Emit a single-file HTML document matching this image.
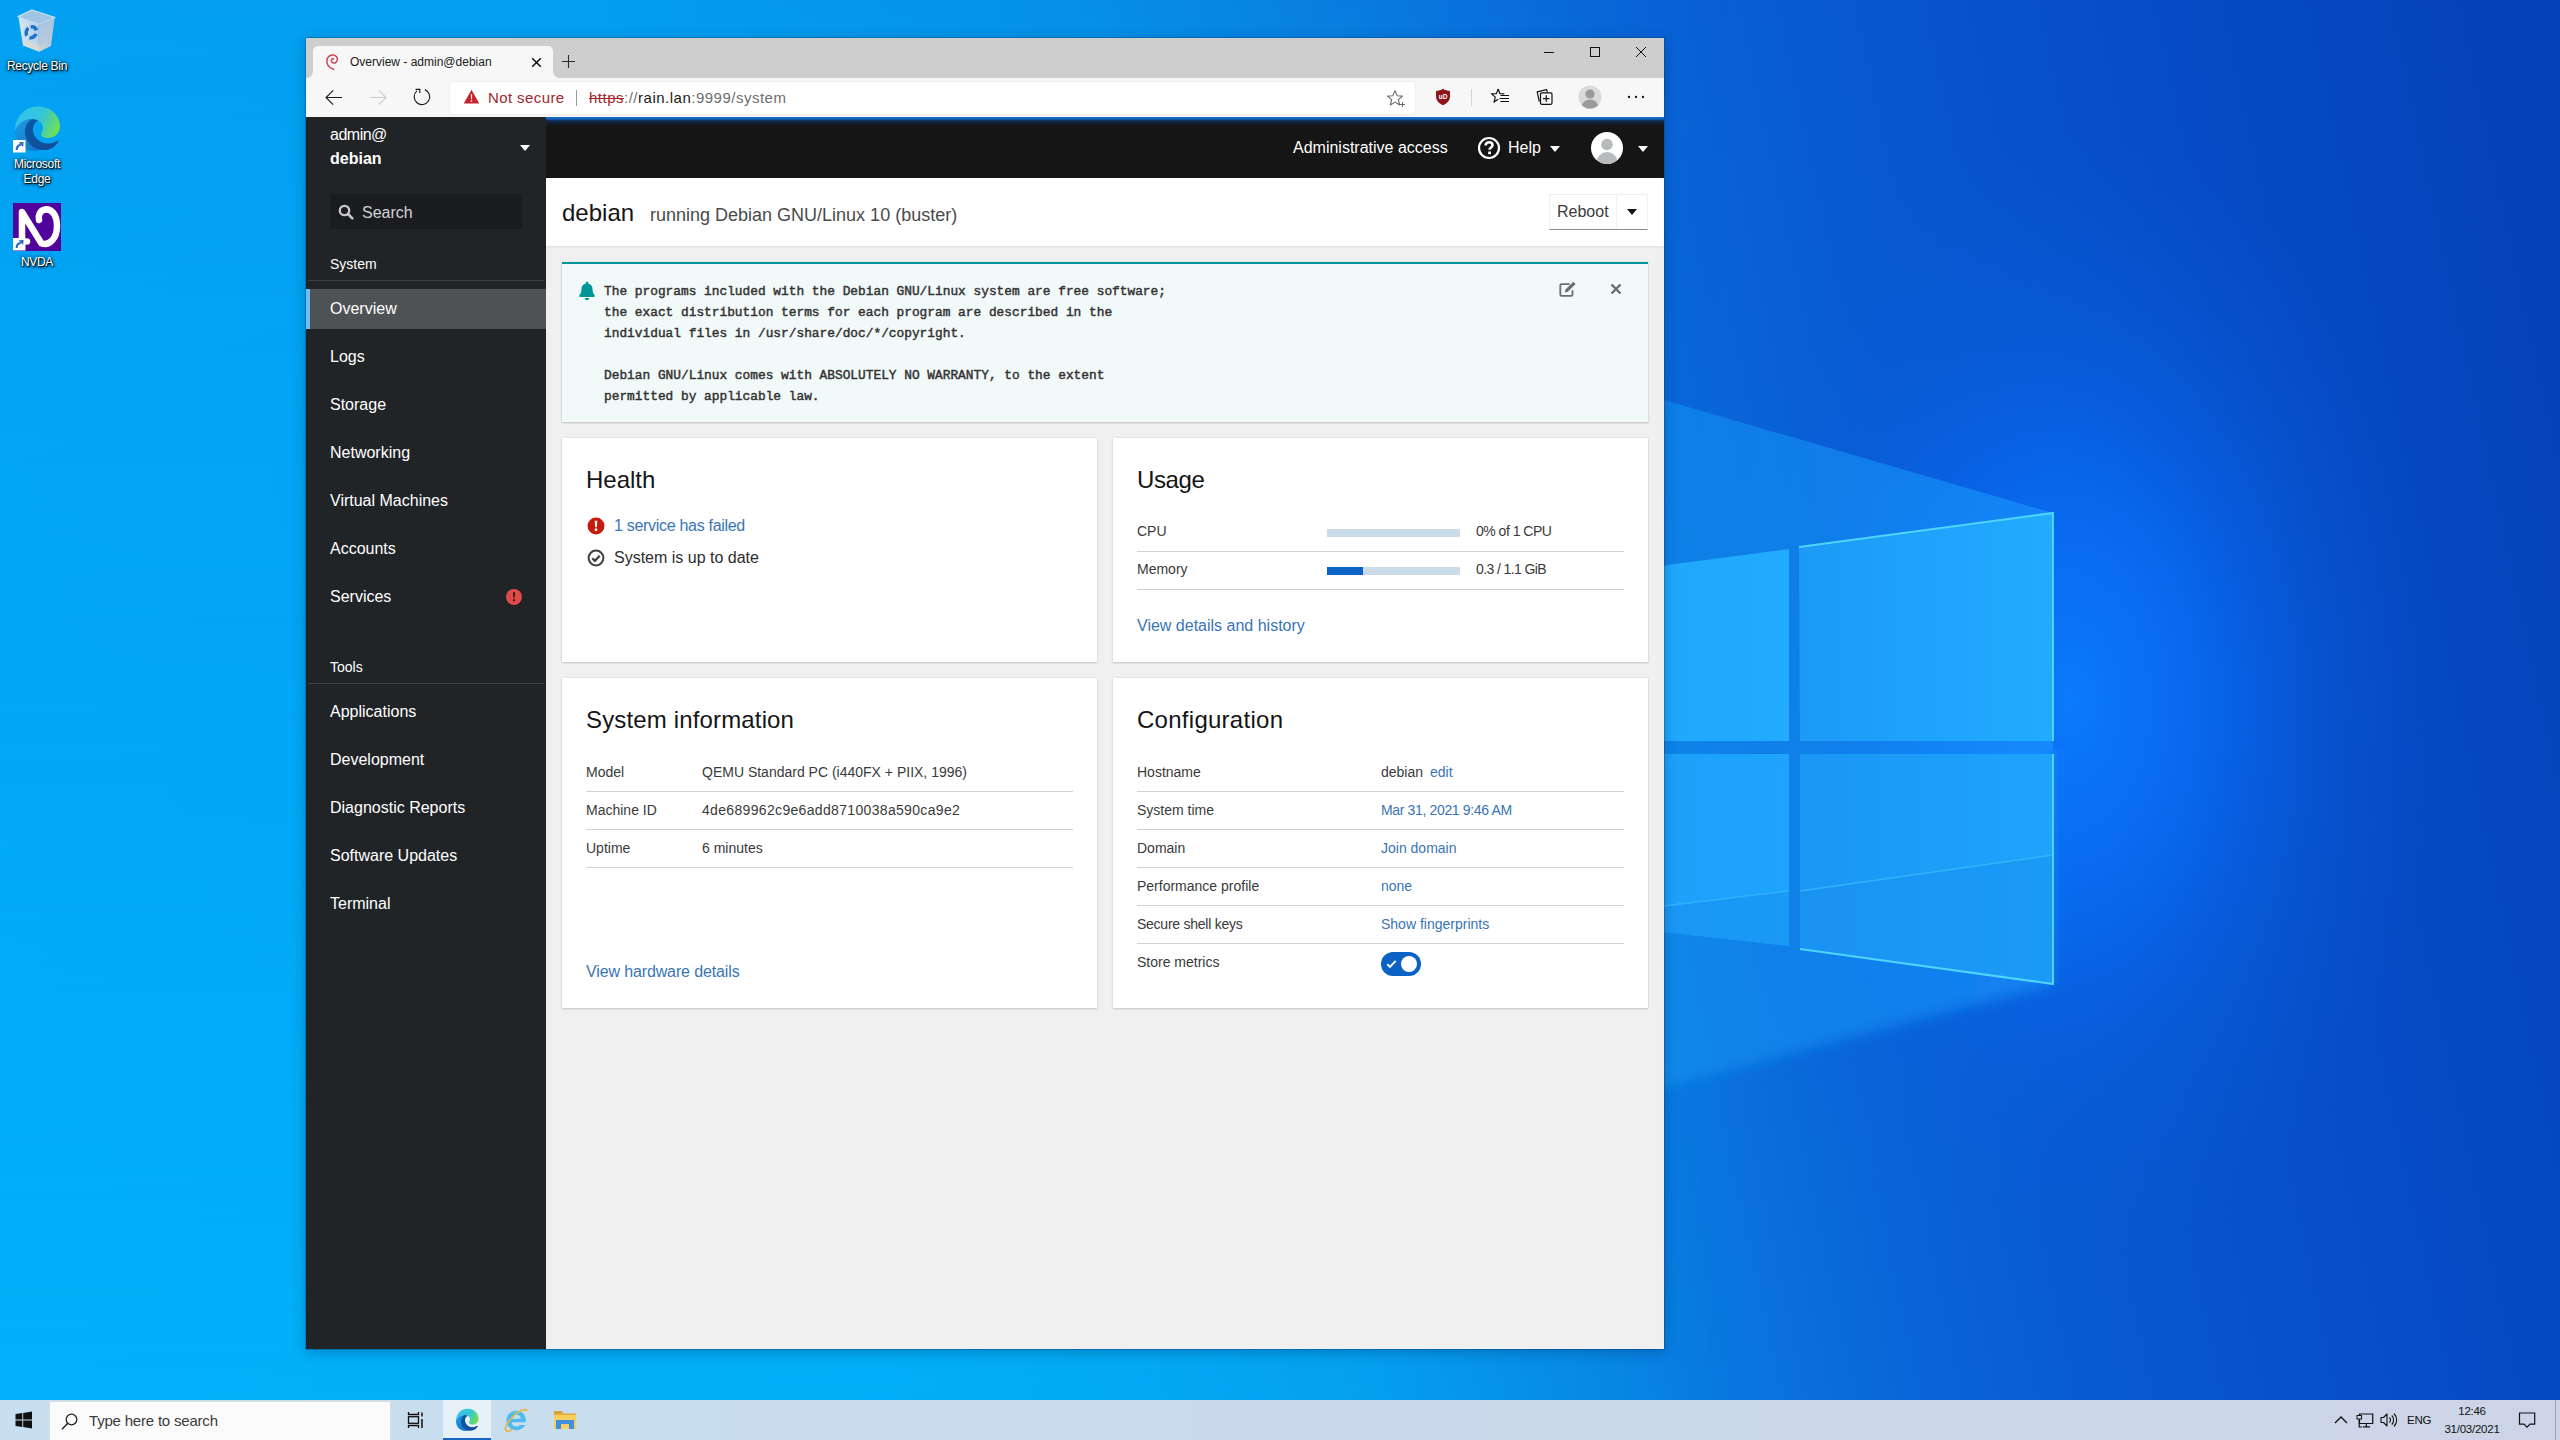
<!DOCTYPE html>
<html lang="en">
<head>
<meta charset="utf-8">
<title>Overview - admin@debian</title>
<style>
*{box-sizing:border-box;margin:0;padding:0}
html,body{width:2560px;height:1440px;overflow:hidden}
body{position:relative;font-family:"Liberation Sans",sans-serif;background:#0391ea;color:#151515}
.abs{position:absolute}
#wall{position:absolute;left:0;top:0;width:2560px;height:1440px}
/* ---------- desktop icons ---------- */
.dlabel{position:absolute;width:90px;text-align:center;color:#fff;font-size:12px;line-height:15px;letter-spacing:-.3px;text-shadow:1px 1px 1px rgba(0,0,0,.95),0 1px 3px rgba(0,0,0,.85),0 0 4px rgba(0,0,0,.6)}
/* ---------- window ---------- */
#win{position:absolute;left:306px;top:38px;width:1358px;height:1311px;background:#f0f0f0;box-shadow:0 0 0 1px rgba(0,50,100,.28),0 3px 12px rgba(0,30,70,.3);overflow:hidden}
#tabstrip{position:absolute;left:0;top:0;width:1358px;height:40px;background:#cecece}
#tab{position:absolute;left:7px;top:8px;width:240px;height:32px;background:#f7f7f7;border-radius:5px 5px 0 0}
#tab:before,#tab:after{content:"";position:absolute;bottom:0;width:6px;height:6px}
#tab:before{left:-6px;background:radial-gradient(circle at 0 0,rgba(247,247,247,0) 5.500px,#f7f7f7 6px)}
#tab:after{right:-6px;background:radial-gradient(circle at 100% 0,rgba(247,247,247,0) 5.500px,#f7f7f7 6px)}
#tab .ttl{position:absolute;left:37px;top:9px;font-size:12px;color:#1b1b1b;white-space:nowrap}
#toolbar{position:absolute;left:0;top:40px;width:1358px;height:39px;background:#f7f7f7}
#addr{position:absolute;left:144px;top:4px;width:965px;height:32px;background:#fff;border-radius:3px;box-shadow:0 0 2px rgba(0,0,0,.12)}
#addr .ns{position:absolute;left:38px;top:7px;letter-spacing:.4px;font-size:15px;color:#a4262c;white-space:nowrap}
#addr .sep{position:absolute;left:126px;top:8px;width:1px;height:16px;background:#9a9a9a}
#addr .url{position:absolute;left:139px;top:7px;letter-spacing:.5px;font-size:15px;color:#6e6e6e;white-space:nowrap}
#addr .url s{color:#a4262c}
#addr .url b{font-weight:400;color:#1b1b1b}
/* ---------- page ---------- */
#page{position:absolute;left:0;top:79px;width:1358px;height:1232px;background:#f0f0f0;overflow:hidden}
#side{position:absolute;left:0;top:0;width:240px;height:1232px;background:#212427;color:#fff}
#topbar{position:absolute;left:240px;top:0;width:1118px;height:61px;background:#151515;color:#fff}
#load{position:absolute;left:240px;top:0;width:1118px;height:9px;background:linear-gradient(#1a6ccc 0,#1562ba 2.200px,#0f3466 3.200px,#11233c 5px,rgba(21,21,21,0) 9px)}
#phead{position:absolute;left:240px;top:61px;width:1118px;height:68px;background:#fff;box-shadow:0 1px 2px rgba(0,0,0,.08)}

/* sidebar (coords relative to #page: x-306, y-117) */
#side .host1{position:absolute;left:24px;top:8px;letter-spacing:-.5px;font-size:16px;line-height:20px;white-space:nowrap}
#side .host2{position:absolute;left:24px;top:32px;font-size:16px;line-height:20px;font-weight:700;white-space:nowrap}
.caret{position:absolute;width:0;height:0;border-left:5px solid transparent;border-right:5px solid transparent;border-top:6px solid #fff}
#sbox{position:absolute;left:24px;top:77px;width:192px;height:35px;background:#1a1c20;border-radius:2px}
#sbox span{position:absolute;left:32px;top:9px;font-size:16px;line-height:20px;color:#d2d2d2}
.sect{position:absolute;left:24px;font-size:14px;line-height:18px;color:#fff}
.sdiv{position:absolute;left:2px;width:236px;height:1px;background:#3c3f42}
.nav{position:absolute;left:0;width:240px;height:40px;padding:10px 0 0 24px;font-size:16px;line-height:20px;color:#fff;white-space:nowrap}
.nav.cur{background:#4f5255}
.nav.cur:before{content:"";position:absolute;left:0;top:0;width:4px;height:40px;background:#73bcf7}
/* topbar */
#topbar .t{position:absolute;top:21px;font-size:16px;line-height:20px;white-space:nowrap}
/* page header */
#phead h1{position:absolute;left:16px;top:21px;font-size:24px;line-height:28px;font-weight:400;color:#151515;white-space:nowrap}
#phead .sub{position:absolute;left:104px;top:25px;font-size:18px;line-height:24px;color:#4a4a4a;white-space:nowrap}
#reboot{position:absolute;left:1003px;top:16px;width:99px;height:36px;background:#fff;border:1px solid #f0f0f0;border-bottom:1px solid #8a8d90}
#reboot span{position:absolute;left:7px;top:7px;font-size:16px;line-height:20px;color:#3c3c3c}
#reboot i{position:absolute;left:66px;top:0;width:1px;height:34px;background:#f0f0f0}

/* content (coords relative to #page: x-306, y-117) */
#motd{position:absolute;left:256px;top:145px;width:1086px;height:160px;background:#f2f9f9;border-top:2px solid #009596;box-shadow:0 1px 2px rgba(3,3,3,.18),0 0 2px rgba(3,3,3,.08)}
#motd pre{position:absolute;left:42px;top:17px;font-family:"Liberation Mono",monospace;font-weight:400;-webkit-text-stroke:.45px #333;font-size:12.830px;line-height:21px;color:#333}
.card{position:absolute;background:#fff;box-shadow:0 1px 2px rgba(3,3,3,.16),0 0 2px rgba(3,3,3,.08)}
.card h2{position:absolute;left:24px;top:27px;font-size:24px;line-height:30px;font-weight:400;color:#151515;white-space:nowrap}
.card .r{position:absolute;margin-top:-1px;font-size:14px;line-height:18px;color:#3a3a3a;white-space:nowrap}
.card .ln{position:absolute;left:24px;width:487px;height:1px;background:#d2d2d2}
.card .t16{position:absolute;font-size:16px;line-height:20px;color:#2d2d2d;white-space:nowrap}
.lnk{color:#3975b5 !important}
.bar{position:absolute;left:214px;width:133px;height:8px;background:#ccdbe8}
.bar b{display:block;height:8px;background:#0b62c4}
/* ---------- taskbar ---------- */
#task{position:absolute;left:0;top:1400px;width:2560px;height:40px;background:linear-gradient(90deg,#c7dff0 0,#c8ddee 25%,#cad8ea 60%,#ccd5e7 100%)}

#task .sb{position:absolute;left:49px;top:1px;width:342px;height:39px;background:#fbfbfb;border:1px solid #d8dde2;border-bottom:0}
#task .sb span{position:absolute;left:39px;top:10px;letter-spacing:-.2px;font-size:15px;line-height:18px;color:#3b3b3b;white-space:nowrap}
#task .act{position:absolute;left:443px;top:0;width:48px;height:40px;background:rgba(255,255,255,.55);border-bottom:2px solid #1466c0}
#task .tt{position:absolute;font-size:11.500px;letter-spacing:-.25px;line-height:14px;color:#111;white-space:nowrap;text-align:center}
</style>
</head>
<body>
<svg id="wall" width="2560" height="1440" viewBox="0 0 2560 1440">
<defs>
<linearGradient id="wg" x1="0" y1="994" x2="2560" y2="446" gradientUnits="userSpaceOnUse">
<stop offset="0" stop-color="#03a9f7"/><stop offset=".3" stop-color="#03a6f4"/><stop offset=".48" stop-color="#0598eb"/>
<stop offset=".58" stop-color="#0881e3"/><stop offset=".66" stop-color="#0a6ada"/><stop offset=".76" stop-color="#0858d0"/><stop offset=".88" stop-color="#064cc6"/><stop offset="1" stop-color="#0543ba"/>
</linearGradient>
<linearGradient id="wv" x1="0" x2="0" y1="0" y2="1">
<stop offset="0" stop-color="#0a50c0" stop-opacity=".09"/><stop offset=".35" stop-color="#0a50c0" stop-opacity=".02"/>
<stop offset=".6" stop-color="#00c0ff" stop-opacity=".05"/><stop offset="1" stop-color="#00c8ff" stop-opacity=".28"/>
</linearGradient>
<linearGradient id="wvm" x1="0" x2="1" y1="0" y2="0"><stop offset="0" stop-color="#fff"/><stop offset=".45" stop-color="#fff"/><stop offset=".68" stop-color="#000"/></linearGradient>
<mask id="wm"><rect width="2560" height="1440" fill="url(#wvm)"/></mask>
<radialGradient id="glow" cx="0" cy="0" r="1" gradientUnits="userSpaceOnUse" gradientTransform="translate(2070 700) scale(370 570)">
<stop offset="0" stop-color="#0c7cff" stop-opacity=".95"/><stop offset=".35" stop-color="#0870fb" stop-opacity=".72"/><stop offset=".7" stop-color="#0a64e8" stop-opacity=".26"/><stop offset="1" stop-color="#0a5ce0" stop-opacity="0"/>
</radialGradient>
<filter id="bl" x="-5%" y="-5%" width="110%" height="110%"><feGaussianBlur stdDeviation="7"/></filter>
<clipPath id="cTop"><rect x="0" y="0" width="2560" height="750"/></clipPath>
<clipPath id="cBot"><rect x="0" y="750" width="2560" height="690"/></clipPath>
<linearGradient id="beam" x1="2053" x2="900" y1="0" y2="0" gradientUnits="userSpaceOnUse">
<stop offset="0" stop-color="#1e9cff" stop-opacity=".55"/><stop offset=".4" stop-color="#10a0f8" stop-opacity=".4"/><stop offset="1" stop-color="#06a6f4" stop-opacity="0"/>
</linearGradient>
<linearGradient id="pane" x1="0" x2="1" y1="0" y2="0"><stop offset="0" stop-color="#1c9af6"/><stop offset="1" stop-color="#21acff"/></linearGradient>
<linearGradient id="pane2" x1="0" x2="1" y1="0" y2="0"><stop offset="0" stop-color="#1a96f4"/><stop offset="1" stop-color="#1ea4fc"/></linearGradient>
</defs>
<rect width="2560" height="1440" fill="url(#wg)"/>
<rect width="2560" height="1440" fill="url(#wv)" mask="url(#wm)"/>
<rect width="2560" height="1440" fill="url(#glow)"/>
<g clip-path="url(#cTop)"><polygon points="2053,513 900,178 900,1290 2053,984" fill="url(#beam)"/></g>
<g clip-path="url(#cBot)"><polygon points="2053,513 900,178 900,1290 2053,984" fill="url(#beam)" filter="url(#bl)"/></g>
<polygon points="1340,608 1789,549 1789,741 1340,741" fill="url(#pane)"/>
<polygon points="1340,754 1789,754 1789,946 1340,896" fill="url(#pane2)"/>
<polygon points="1799,547 2053,513 2053,741 1800,741" fill="url(#pane)"/>
<polygon points="1800,754 2053,754 2053,984 1800,949" fill="url(#pane2)"/>
<polygon points="1340,945 1789,891 1789,946 1340,896" fill="#1890f0" opacity=".55"/>
<polygon points="1800,891 2053,855 2053,984 1800,949" fill="#1890f0" opacity=".5"/>
<polyline points="1800,891 2053,855" stroke="#3cc0ff" stroke-width="1.5" fill="none" opacity=".7"/>
<polyline points="1340,945 1789,891" stroke="#3cc0ff" stroke-width="1.5" fill="none" opacity=".6"/>
<polyline points="1799,547 2053,513 2053,741" stroke="#55dcff" stroke-width="2" fill="none" opacity=".9"/>
<polyline points="2053,754 2053,984 1800,949" stroke="#55dcff" stroke-width="2" fill="none" opacity=".9"/>
</svg>
<svg class="abs" style="left:16px;top:8px" width="42" height="46" viewBox="0 0 42 46">
<defs><linearGradient id="rb1" x1="0" x2="1"><stop offset="0" stop-color="#d3e6f6"/><stop offset="1" stop-color="#b9d0e6"/></linearGradient><linearGradient id="rb2" x1="0" x2="0" y1="0" y2="1"><stop offset="0" stop-color="#a9c4de"/><stop offset=".75" stop-color="#b6cbe0"/><stop offset="1" stop-color="#d9d9c8"/></linearGradient></defs>
<path d="M2 8.500L16 2l23 7.500-16.500 7z" fill="#9fc4e4" stroke="#c9e6fb" stroke-width="1.300" stroke-linejoin="round"/>
<path d="M2.500 9.200l20 7.400.5 27.200L7 37.500z" fill="url(#rb1)"/>
<path d="M22.500 16.600L38.700 9.800 35 38l-12 5.800z" fill="url(#rb2)"/>
<path d="M7.200 37.300l15.800 6.300v-7l-16.400-5z" fill="#e6dccb" opacity=".55"/>
<circle cx="13.500" cy="24.700" r="5.300" fill="none" stroke="#1f72cb" stroke-width="3.500" stroke-dasharray="7.700 3.400" transform="rotate(-105 13.500 24.700) skewY(8)"/>
</svg>
<div class="dlabel" style="left:-8px;top:59px">Recycle Bin</div>

<svg class="abs" style="left:13px;top:105px" width="48" height="48" viewBox="0 0 48 48"><defs>
<linearGradient id="eg1" x1="0" x2="1" y1=".3" y2=".6"><stop offset="0" stop-color="#35c1f1"/><stop offset=".55" stop-color="#34c6d8"/><stop offset="1" stop-color="#73e04c"/></linearGradient>
<linearGradient id="eg2" x1="0" x2="1" y1="0" y2="1"><stop offset="0" stop-color="#1b9de2"/><stop offset="1" stop-color="#1467c4"/></linearGradient>
<linearGradient id="eg3" x1="0" x2="1" y1="0" y2="1"><stop offset="0" stop-color="#0c59a4"/><stop offset="1" stop-color="#134a96"/></linearGradient>
</defs><path d="M2 26C2 12 12 1.500 25 1.500c13 0 22 9.500 22 19.500 0 8-6 12-12 12-5 0-7-2-7-4s2-3 2-6c0-5-5-9-11-9-9 0-15 7-17 12z" fill="url(#eg1)"/>
<path d="M2 26c2-6 8-12 17-12 2 0 4 .5 6 1.500-3 1.500-5 4.500-5 8.500-.5 7 5 13.500 13 14.500 4 .5 8-.5 10.800-2.500.7-.5 1.700 0 1.200 1-3 5-8 8-14 8-3 0-6.500.700-9 .800C10 46 2 38 2 26z" fill="url(#eg2)"/>
<path d="M19 14c2 0 4 .5 6 1.500-3 1.500-4.800 4.500-5 8.500-.5 7 5 13.500 13 14.500 4 .5 8-.5 10.800-2.500.7-.5 1.700 0 1.200 1-3 5-8 8-14 8-11 0-19-8-19-18 0-5 2-10 7-13z" fill="url(#eg3)"/><g transform="translate(0,35)"><rect width="12.500" height="12.500" fill="#fff"/><path d="M3.600 10c0-3.200 1.600-4.800 4.200-5.300" fill="none" stroke="#2b66c4" stroke-width="2.100"/><path d="M5.600 2.300l5-.4-.5 5z" fill="#2b66c4"/></g></svg>
<div class="dlabel" style="left:-8px;top:157px">Microsoft<br>Edge</div>

<svg class="abs" style="left:13px;top:203px" width="48" height="48" viewBox="0 0 48 48"><rect width="48" height="48" fill="#50049c"/>
<path d="M9 40V9L28.500 40.500c7.500 2.500 15.500-4.500 15.500-17.500C44 11 38 5.500 32 6.500c-5 1-7 5.500-6 10.500" fill="none" stroke="#fff" stroke-width="6.500" stroke-linecap="round" stroke-linejoin="round"/>
<circle cx="14" cy="38.500" r="3.200" fill="#fff"/><g transform="translate(0,35)"><rect width="12.500" height="12.500" fill="#fff"/><path d="M3.600 10c0-3.200 1.600-4.800 4.200-5.300" fill="none" stroke="#2b66c4" stroke-width="2.100"/><path d="M5.600 2.300l5-.4-.5 5z" fill="#2b66c4"/></g></svg>
<div class="dlabel" style="left:-8px;top:255px">NVDA</div>
<div id="win">
  <div id="tabstrip">
    <div id="tab"><svg class="abs" style="left:11px;top:7px" width="16" height="18" viewBox="0 0 16 18"><path d="M9.6 16.2C5.2 14.8 2.4 11.4 2.9 7.4 3.4 3.8 6.3 1.6 9.4 2c2.7.4 4.3 2.6 3.9 5-.3 2-2 3.3-3.8 3-1.4-.2-2.3-1.4-2.1-2.7.2-1 1.100-1.700 2.100-1.500" fill="none" stroke="#d0435a" stroke-width="1.5" stroke-linecap="round"/></svg><span class="ttl">Overview - admin@debian</span>
<svg class="abs" style="left:218px;top:11px" width="11" height="11" viewBox="0 0 11 11"><path d="M1.2 1.2l8.600 8.600M9.800 1.200l-8.600 8.600" stroke="#111" stroke-width="1.500" fill="none"/></svg></div>
<svg class="abs" style="left:255px;top:16px" width="15" height="15" viewBox="0 0 15 15"><path d="M7.500 1v13M1 7.500h13" stroke="#2b2b2b" stroke-width="1.100" fill="none"/></svg>
<svg class="abs" style="left:1237px;top:8px" width="12" height="12" viewBox="0 0 12 12"><path d="M1 6.500h10" stroke="#111" stroke-width="1" fill="none"/></svg>
<svg class="abs" style="left:1283px;top:8px" width="12" height="12" viewBox="0 0 12 12"><rect x="1.500" y="1.500" width="9" height="9" stroke="#111" stroke-width="1" fill="none"/></svg>
<svg class="abs" style="left:1329px;top:8px" width="12" height="12" viewBox="0 0 12 12"><path d="M1 1l10 10M11 1L1 11" stroke="#111" stroke-width="1" fill="none"/></svg>
  </div>
  <div id="toolbar"><svg class="abs" style="left:18px;top:10px" width="20" height="18" viewBox="0 0 20 18"><path d="M18 9.500H2.500M9.200 2.300L2 9.500l7.200 7.200" stroke="#1b1b1b" stroke-width="1.100" fill="none"/></svg>
<svg class="abs" style="left:62px;top:10px" width="20" height="18" viewBox="0 0 20 18"><path d="M2 9.500h15.500M10.800 2.300L18 9.500l-7.200 7.200" stroke="#cdcdcd" stroke-width="1.100" fill="none"/></svg>
<svg class="abs" style="left:106px;top:9px" width="20" height="20" viewBox="0 0 20 20"><path d="M12.800 2.600A7.750 7.750 0 1 1 4.900 3.900" stroke="#1b1b1b" stroke-width="1.150" fill="none"/><path d="M3.600 2.350H7.800V6" stroke="#1b1b1b" stroke-width="1.150" fill="none"/></svg>
    <svg class="abs" style="left:1129px;top:10px" width="16" height="18" viewBox="0 0 16 18"><path d="M8 .800c2 1.400 4.500 2.100 7 2.200v5.500c0 4-3 7-7 8.700-4-1.700-7-4.700-7-8.700V3c2.500-.1 5-.8 7-2.200z" fill="#8e1519"/><text x="8" y="11" font-family="Liberation Sans" font-size="6.500" font-weight="700" fill="#fff" text-anchor="middle">uD</text></svg>
<div class="abs" style="left:1165px;top:11px;width:1px;height:17px;background:#d4d4d4"></div>
<svg class="abs" style="left:1184px;top:8px" width="22" height="22" viewBox="0 0 22 22"><path d="M8.200 3l1.700 4.600 4.400.250" fill="none" stroke="#111" stroke-width="1.200"/><path d="M8.200 3L6.400 7.600l-4.900.3 3.800 3.200-1.300 5 4.200-2.800" fill="none" stroke="#111" stroke-width="1.200" stroke-linejoin="round"/><path d="M10.500 9.500H19M9.500 12.500H19M10.500 15.500H19" stroke="#111" stroke-width="1.200"/></svg>
<svg class="abs" style="left:1228px;top:8px" width="22" height="22" viewBox="0 0 22 22"><path d="M5.300 15.500L3.200 5.800l9.500-2.100.7 3" fill="none" stroke="#111" stroke-width="1.200" stroke-linejoin="round"/><rect x="6.500" y="6.800" width="11.500" height="11.500" rx="1.200" fill="#f7f7f7" stroke="#111" stroke-width="1.200"/><path d="M12.250 9.300v6.500M9 12.550h6.500" stroke="#111" stroke-width="1.200"/></svg>
<svg class="abs" style="left:1272px;top:7px" width="24" height="24" viewBox="0 0 24 24"><defs><clipPath id="pc"><circle cx="12" cy="12" r="11.500"/></clipPath></defs><circle cx="12" cy="12" r="11.500" fill="#dadada"/><g clip-path="url(#pc)" fill="#9b9b9b"><circle cx="12" cy="9" r="4.600"/><ellipse cx="12" cy="21" rx="8" ry="6.500"/></g></svg>
<svg class="abs" style="left:1320px;top:17px" width="20" height="4" viewBox="0 0 20 4"><circle cx="3" cy="2" r="1.150" fill="#111"/><circle cx="10" cy="2" r="1.150" fill="#111"/><circle cx="17" cy="2" r="1.150" fill="#111"/></svg><div id="addr">
      <svg class="abs" style="left:13px;top:7px" width="17" height="16" viewBox="0 0 17 16"><path d="M8.500 .800L16.300 14.600H.700z" fill="#c4262c"/><path d="M7.800 5.200h1.400l-.25 5h-.9zM7.800 11.300h1.400v1.500H7.800z" fill="#fff"/></svg>
<svg class="abs" style="left:935px;top:6px" width="22" height="22" viewBox="0 0 22 22"><path d="M10 2.600l2.150 5.150 5.350.350-4.150 3.500 1.350 5.400L10 14.100 5.300 17l1.350-5.400L2.500 8.100l5.350-.350z" fill="none" stroke="#6b6b6b" stroke-width="1.100" stroke-linejoin="round"/><path d="M17.500 14v5M15 16.500h5" stroke="#6b6b6b" stroke-width="1.100"/></svg><span class="ns">Not secure</span><span class="sep"></span>
      <span class="url"><s>https</s>://<b>rain.lan</b>:9999/system</span>
    </div>
  </div>
  <div id="page">
    <div id="side"><div class="host1">admin@</div><div class="host2">debian</div>
<div class="caret" style="left:214px;top:28px"></div>
<div id="sbox"><svg class="abs" style="left:8px;top:10px" width="16" height="16" viewBox="0 0 16 16"><circle cx="6.500" cy="6.500" r="4.700" fill="none" stroke="#c8c8c8" stroke-width="2.300"/><path d="M10 10l4.300 4.300" stroke="#c8c8c8" stroke-width="2.600" stroke-linecap="round"/></svg><span>Search</span></div>
<div class="sect" style="top:138px">System</div><div class="sdiv" style="top:163px"></div>
<div class="nav cur" style="top:172px">Overview</div>
<div class="nav" style="top:220px">Logs</div>
<div class="nav" style="top:268px">Storage</div>
<div class="nav" style="top:316px">Networking</div>
<div class="nav" style="top:364px">Virtual Machines</div>
<div class="nav" style="top:412px">Accounts</div>
<div class="nav" style="top:460px">Services<svg class="abs" style="left:199px;top:11px" width="18" height="18" viewBox="0 0 18 18"><circle cx="9" cy="9" r="8" fill="#e04a48"/><path d="M8 4.300h2l-.3 5.500H8.300zM8 11.300h2v2H8z" fill="#3a1412"/></svg></div>
<div class="sect" style="top:541px">Tools</div><div class="sdiv" style="top:566px"></div>
<div class="nav" style="top:575px">Applications</div>
<div class="nav" style="top:623px">Development</div>
<div class="nav" style="top:671px">Diagnostic Reports</div>
<div class="nav" style="top:719px">Software Updates</div>
<div class="nav" style="top:767px">Terminal</div></div>
    <div id="topbar"><span class="t" style="left:747px">Administrative access</span>
<svg class="abs" style="left:931px;top:19px" width="24" height="24" viewBox="0 0 24 24"><circle cx="12" cy="12" r="10" fill="none" stroke="#fff" stroke-width="2.200"/><path d="M8.600 9.600c0-2 1.500-3.300 3.500-3.300s3.400 1.200 3.400 2.900c0 2.300-2.900 2.400-2.900 4.500" fill="none" stroke="#fff" stroke-width="2.600"/><rect x="11.200" y="15.500" width="2.700" height="2.700" fill="#fff"/></svg>
<span class="t" style="left:962px">Help</span>
<div class="caret" style="left:1004px;top:29px"></div>
<svg class="abs" style="left:1045px;top:15px" width="32" height="32" viewBox="0 0 32 32"><defs><clipPath id="ac"><circle cx="16" cy="16" r="16"/></clipPath></defs><circle cx="16" cy="16" r="16" fill="#fff"/><g clip-path="url(#ac)" fill="#b8bbbe"><circle cx="16" cy="12.500" r="5.800"/><ellipse cx="16" cy="30" rx="10.500" ry="10"/></g></svg>
<div class="caret" style="left:1092px;top:29px"></div></div>
    <div id="load"></div>
    <div id="phead"><h1>debian</h1><span class="sub">running Debian GNU/Linux 10 (buster)</span>
<div id="reboot"><span>Reboot</span><i></i><div class="caret" style="left:77px;top:14px;border-top-color:#151515"></div></div></div>
    <div id="motd">
<svg class="abs" style="left:16px;top:17px" width="18" height="20" viewBox="0 0 18 20"><path d="M9 .800c.7 0 1.200.500 1.200 1.200v.5c2.600.6 4.300 2.800 4.300 5.500 0 3.500 1 4.800 2 5.900.7.800.200 2-.8 2H2.300c-1 0-1.500-1.200-.8-2 1-1.100 2-2.400 2-5.900 0-2.700 1.700-4.900 4.300-5.500V2C7.800 1.300 8.300.800 9 .800z" fill="#009596"/><path d="M6.800 17h4.400c0 1.300-1 2.200-2.200 2.200s-2.200-.9-2.200-2.200z" fill="#009596"/></svg>
<pre>The programs included with the Debian GNU/Linux system are free software;
the exact distribution terms for each program are described in the
individual files in /usr/share/doc/*/copyright.

Debian GNU/Linux comes with ABSOLUTELY NO WARRANTY, to the extent
permitted by applicable law.</pre>
<svg class="abs" style="left:997px;top:17px" width="18" height="16" viewBox="0 0 18 16"><path d="M10.500 3.200H2.600c-.8 0-1.300.5-1.300 1.300v9c0 .8.500 1.300 1.300 1.300h9.600c.8 0 1.300-.5 1.300-1.300V9.300" fill="none" stroke="#6a6e73" stroke-width="1.800"/><path d="M14.300.700l2.300 2.300-7.800 7.800-3 .7.700-3z" fill="#6a6e73"/></svg>
<svg class="abs" style="left:1048px;top:19px" width="12" height="12" viewBox="0 0 12 12"><path d="M1.500 1.500l9 9M10.500 1.500l-9 9" stroke="#6a6e73" stroke-width="2.400" fill="none"/></svg>
</div>

<div class="card" style="left:256px;top:321px;width:535px;height:224px"><h2>Health</h2>
<svg class="abs" style="left:25px;top:79px" width="18" height="18" viewBox="0 0 18 18"><circle cx="9" cy="9" r="8.500" fill="#c9190b"/><path d="M7.700 3.800h2.600l-.4 6.400H8.100zM7.800 11.600h2.400v2.400H7.800z" fill="#fff"/></svg>
<span class="t16 lnk" style="left:52px;top:78px;letter-spacing:-.3px">1 service has failed</span>
<svg class="abs" style="left:25px;top:111px" width="18" height="18" viewBox="0 0 18 18"><circle cx="9" cy="9" r="7.400" fill="none" stroke="#3c3f42" stroke-width="2"/><path d="M5.300 9.200l2.600 2.600 4.800-5" fill="none" stroke="#3c3f42" stroke-width="2.300"/></svg>
<span class="t16" style="left:52px;top:110px">System is up to date</span>
</div>

<div class="card" style="left:807px;top:321px;width:535px;height:224px"><h2 style="letter-spacing:-.4px">Usage</h2>
<span class="r" style="left:24px;top:85px">CPU</span><div class="bar" style="top:91px"></div><span class="r" style="left:363px;top:85px;letter-spacing:-.5px">0% of 1 CPU</span>
<div class="ln" style="top:113px"></div>
<span class="r" style="left:24px;top:123px">Memory</span><div class="bar" style="top:129px"><b style="width:36px"></b></div><span class="r" style="left:363px;top:123px;letter-spacing:-.6px">0.3 / 1.1 GiB</span>
<div class="ln" style="top:151px"></div>
<span class="t16 lnk" style="left:24px;top:178px">View details and history</span>
</div>

<div class="card" style="left:256px;top:561px;width:535px;height:330px"><h2 style="letter-spacing:.15px">System information</h2>
<span class="r" style="left:24px;top:86px">Model</span><span class="r" style="left:140px;top:86px">QEMU Standard PC (i440FX + PIIX, 1996)</span><div class="ln" style="top:113px"></div>
<span class="r" style="left:24px;top:124px">Machine ID</span><span class="r" style="left:140px;top:124px;letter-spacing:.33px">4de689962c9e6add8710038a590ca9e2</span><div class="ln" style="top:151px"></div>
<span class="r" style="left:24px;top:162px">Uptime</span><span class="r" style="left:140px;top:162px">6 minutes</span><div class="ln" style="top:189px"></div>
<span class="t16 lnk" style="left:24px;top:284px;letter-spacing:-.13px">View hardware details</span>
</div>

<div class="card" style="left:807px;top:561px;width:535px;height:330px"><h2 style="letter-spacing:.27px">Configuration</h2>
<span class="r" style="left:24px;top:86px">Hostname</span><span class="r" style="left:268px;top:86px">debian</span><span class="r lnk" style="left:317px;top:86px">edit</span><div class="ln" style="top:113px"></div>
<span class="r" style="left:24px;top:124px">System time</span><span class="r lnk" style="left:268px;top:124px;letter-spacing:-.35px">Mar 31, 2021 9:46 AM</span><div class="ln" style="top:151px"></div>
<span class="r" style="left:24px;top:162px">Domain</span><span class="r lnk" style="left:268px;top:162px">Join domain</span><div class="ln" style="top:189px"></div>
<span class="r" style="left:24px;top:200px">Performance profile</span><span class="r lnk" style="left:268px;top:200px">none</span><div class="ln" style="top:227px"></div>
<span class="r" style="left:24px;top:238px;letter-spacing:-.25px">Secure shell keys</span><span class="r lnk" style="left:268px;top:238px">Show fingerprints</span><div class="ln" style="top:265px"></div>
<span class="r" style="left:24px;top:276px">Store metrics</span>
<div class="abs" style="left:268px;top:274px;width:40px;height:24px;border-radius:12px;background:#0b62c4"><svg class="abs" style="left:5px;top:7px" width="11" height="10" viewBox="0 0 11 10"><path d="M1.300 5.200l2.700 2.700 5.700-6" fill="none" stroke="#fff" stroke-width="2"/></svg><div class="abs" style="left:20px;top:4px;width:16px;height:16px;border-radius:8px;background:#fff"></div></div>
</div>
  </div>
</div>
<div id="task"><svg class="abs" style="left:15px;top:11px" width="18" height="18" viewBox="0 0 18 18"><path d="M.5 3l6.800-1v6.500H.5zM8.200 1.900L17 .600v7.900H8.200zM.5 9.400h6.800V16L.5 15zM8.200 9.400H17v8l-8.800-1.300z" fill="#111"/></svg>
<div class="sb"><svg class="abs" style="left:10px;top:10px" width="20" height="20" viewBox="0 0 20 20"><circle cx="11.500" cy="7.500" r="5.300" fill="none" stroke="#222" stroke-width="1.300"/><path d="M7.800 11.300L2 17.200" stroke="#222" stroke-width="1.500"/></svg><span>Type here to search</span></div>
<svg class="abs" style="left:405px;top:11px" width="20" height="18" viewBox="0 0 20 18"><path d="M3.500 1v2.500h10V1M3.500 17v-2.500h10V17" fill="none" stroke="#111" stroke-width="1.300"/><rect x="3.500" y="5.700" width="10" height="6.600" fill="none" stroke="#111" stroke-width="1.300"/><path d="M17 1.500v4M17 8v9" stroke="#111" stroke-width="1.500"/></svg>
<div class="act"></div>
<svg class="abs" style="left:455px;top:8px" width="24" height="24" viewBox="0 0 48 48"><path d="M2 26C2 12 12 1.500 25 1.500c13 0 22 9.500 22 19.500 0 8-6 12-12 12-5 0-7-2-7-4s2-3 2-6c0-5-5-9-11-9-9 0-15 7-17 12z" fill="url(#eh1)"/>
<path d="M2 26c2-6 8-12 17-12 2 0 4 .5 6 1.500-3 1.500-5 4.500-5 8.500-.5 7 5 13.500 13 14.500 4 .5 8-.5 10.800-2.500.7-.5 1.700 0 1.200 1-3 5-8 8-14 8-3 0-6.500.700-9 .800C10 46 2 38 2 26z" fill="url(#eh2)"/>
<path d="M19 14c2 0 4 .5 6 1.500-3 1.500-4.800 4.500-5 8.500-.5 7 5 13.500 13 14.500 4 .5 8-.5 10.800-2.500.7-.5 1.700 0 1.200 1-3 5-8 8-14 8-11 0-19-8-19-18 0-5 2-10 7-13z" fill="url(#eh3)"/><defs>
<linearGradient id="eh1" x1="0" x2="1" y1=".3" y2=".6"><stop offset="0" stop-color="#35c1f1"/><stop offset=".55" stop-color="#34c6d8"/><stop offset="1" stop-color="#73e04c"/></linearGradient>
<linearGradient id="eh2" x1="0" x2="1" y1="0" y2="1"><stop offset="0" stop-color="#1b9de2"/><stop offset="1" stop-color="#1467c4"/></linearGradient>
<linearGradient id="eh3" x1="0" x2="1" y1="0" y2="1"><stop offset="0" stop-color="#0c59a4"/><stop offset="1" stop-color="#134a96"/></linearGradient></defs></svg>
<svg class="abs" style="left:503px;top:7px" width="26" height="26" viewBox="0 0 26 26"><path d="M13.500 3.800c-6 0-10 4.200-10 9.700s4 9.700 10 9.700c3.900 0 7.100-1.900 8.600-5.100h-5.100c-.8 1-2 1.500-3.500 1.500-2.700 0-4.600-1.700-4.900-4.400h14.100c.6-6.500-3.300-11.400-9.200-11.400zm-4.800 7.900c.5-2.400 2.200-3.900 4.700-3.900s4.100 1.500 4.500 3.900z" fill="#4cbcf0"/><path d="M13.500 3.800c-6 0-10 4.200-10 9.700" fill="none" stroke="#7fd4f7" stroke-width=".8"/><path d="M24.500 3.500C22 1.200 16 3.500 10.500 9 4.500 15 1 21.500 3 23.500c1 1 3.500.6 6.500-1.200" fill="none" stroke="#e9b444" stroke-width="1.600"/></svg>
<svg class="abs" style="left:553px;top:9px" width="24" height="22" viewBox="0 0 24 22"><path d="M1 2.500h8l1.500 2H23V20H1z" fill="#e9a93a"/><path d="M1 6h22v14H1z" fill="#f7cf5e"/><path d="M3 11h18v9H3z" fill="#3f8fe0"/><path d="M8 15h8v5H8z" fill="#f7cf5e"/><path d="M1 2.500h8v1.200H1z" fill="#d08e22"/></svg>

<svg class="abs" style="left:2334px;top:15px" width="14" height="9" viewBox="0 0 14 9"><path d="M1 8l6-6 6 6" fill="none" stroke="#111" stroke-width="1.300"/></svg>
<svg class="abs" style="left:2356px;top:13px" width="18" height="15" viewBox="0 0 18 15"><path d="M3.500 4.500V1h13.200v9.500H3.500V6.500" fill="none" stroke="#111" stroke-width="1.200"/><rect x="1" y="2.500" width="4.500" height="3.500" fill="#d0dcea" stroke="#111" stroke-width="1"/><path d="M3.200 6v8h3M7 13.800h7M10.300 10.500v3.300" stroke="#111" stroke-width="1.200" fill="none"/></svg>
<svg class="abs" style="left:2380px;top:12px" width="18" height="16" viewBox="0 0 18 16"><path d="M1 5.500h2.500L7 2v12l-3.500-3.500H1z" fill="none" stroke="#111" stroke-width="1.100" stroke-linejoin="round"/><path d="M9.500 5.500c1.300 1.300 1.300 3.700 0 5M11.800 3.500c2.400 2.400 2.400 6.600 0 9M14 1.500c3.500 3.500 3.500 9.500 0 13" fill="none" stroke="#111" stroke-width="1.100"/></svg>
<span class="tt" style="left:2407px;top:13px">ENG</span>
<span class="tt" style="left:2432px;top:4px;width:80px">12:46</span>
<span class="tt" style="left:2432px;top:22px;width:80px">31/03/2021</span>
<svg class="abs" style="left:2518px;top:12px" width="18" height="17" viewBox="0 0 18 17"><path d="M1.500 1h15.200v11.200h-4.700l-3 3-3-3H1.500z" fill="none" stroke="#111" stroke-width="1.200"/></svg>
<div class="abs" style="left:2555px;top:0;width:1px;height:40px;background:#9aa6b4"></div></div>
</body>
</html>
